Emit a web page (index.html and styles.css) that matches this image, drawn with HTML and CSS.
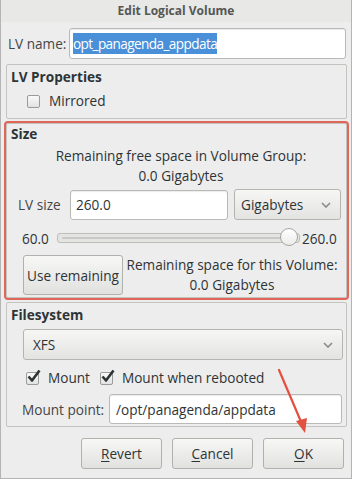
FILE: index.html
```html
<!DOCTYPE html>
<html lang="en">
<head>
    <meta charset="UTF-8">
    <meta name="viewport" content="width=device-width, initial-scale=1.0">
    <title>Edit Logical Volume</title>
    <link rel="stylesheet" href="styles.css">
</head>
<body>
    <div class="dialog">
        <div class="titlebar">Edit Logical Volume</div>

        <div class="content">
            <div class="name-row">
                <span class="label">LV name:</span>
                <div class="entry name-entry"><span class="selected">opt_panagenda_appdata</span></div>
            </div>

            <!-- LV properties -->
            <div class="frame props-frame">
                <div class="frame-title">LV Properties</div>
                <div class="check-row mirrored">
                    <span class="check"></span>
                    <span>Mirrored</span>
                </div>
            </div>

            <!-- size -->
            <div class="frame size-frame">
                <div class="frame-title">Size</div>
                <div class="center-line first">Remaining free space in Volume Group:</div>
                <div class="center-line">0.0 Gigabytes</div>
                <div class="size-row">
                    <span class="label">LV size</span>
                    <div class="entry size-entry">260.0</div>
                    <div class="combo unit-combo">
                        <span>Gigabytes</span>
                        <svg class="chevron" width="10" height="6" viewBox="0 0 10 6"><path d="M1 1 L5 5 L9 1" fill="none" stroke="#8a8a8a" stroke-width="1.6"/></svg>
                    </div>
                </div>
                <div class="slider-row">
                    <span class="slider-min">60.0</span>
                    <div class="trough">
                        <div class="fill"></div>
                        <div class="knob"></div>
                    </div>
                    <span class="slider-max">260.0</span>
                </div>
                <div class="remain-row">
                    <button class="btn use-btn">Use remaining</button>
                    <div class="remain-text">
                        <div>Remaining space for this Volume:</div>
                        <div>0.0 Gigabytes</div>
                    </div>
                </div>
            </div>

            <!-- filesystem -->
            <div class="frame fs-frame">
                <div class="frame-title">Filesystem</div>
                <div class="combo fs-combo">
                    <span>XFS</span>
                    <svg class="chevron" width="10" height="6" viewBox="0 0 10 6"><path d="M1 1 L5 5 L9 1" fill="none" stroke="#8a8a8a" stroke-width="1.6"/></svg>
                </div>
                <div class="mount-row">
                    <div class="check-row">
                        <span class="check checked"><svg width="16" height="14" viewBox="0 0 16 14"><path d="M2.5 7.5 L6 11.5 L13.5 1.5" fill="none" stroke="#2e3436" stroke-width="2.6" stroke-linejoin="round"/></svg></span>
                        <span>Mount</span>
                    </div>
                    <div class="check-row">
                        <span class="check checked"><svg width="16" height="14" viewBox="0 0 16 14"><path d="M2.5 7.5 L6 11.5 L13.5 1.5" fill="none" stroke="#2e3436" stroke-width="2.6" stroke-linejoin="round"/></svg></span>
                        <span>Mount when rebooted</span>
                    </div>
                </div>
                <div class="point-row">
                    <span class="label">Mount point:</span>
                    <div class="entry point-entry">/opt/panagenda/appdata</div>
                </div>
            </div>

            <div class="actions">
                <button class="btn action"><u>R</u>evert</button>
                <button class="btn action"><u>C</u>ancel</button>
                <button class="btn action"><u>O</u>K</button>
            </div>
        </div>

        <!-- annotation arrow -->
        <svg class="arrow" width="60" height="80" viewBox="0 0 60 80">
            <line x1="4" y1="4" x2="27" y2="58" stroke="#e2513f" stroke-width="2.2" stroke-linecap="round"/>
            <path d="M21 55 L30 67 L32 52 Z" fill="#e2513f"/>
        </svg>
    </div>
</body>
</html>
```

FILE: styles.css
```css
body { margin: 0; background: #ffffff; font-family: "Open Sans", "DejaVu Sans", sans-serif; font-size: 13.6px; color: #2e3436; }
.dialog { position: relative; width: 352px; height: 479px; box-sizing: border-box; border: 1px solid #b4b4b4; border-top: none; background: #ededed; }
.titlebar { height: 22px; line-height: 22px; text-align: center; font-size: 12px; font-weight: bold; color: #555753; background: #e8e8e7; }
.content { padding: 6px 4px 0 5px; }
.label { color: #454545; }

.entry { background: #fff; border: 1px solid #b9b9b6; border-radius: 3px; box-shadow: inset 0 1px 1px rgba(0,0,0,0.08); box-sizing: border-box; display: flex; align-items: center; padding-left: 5px; }
.selected { background: #4a90d9; color: #fff; padding: 1px 0; letter-spacing: -0.6px; }

.name-row { display: flex; align-items: center; height: 31px; }
.name-row .label { padding-left: 2px; width: 61px; }
.name-entry { width: 277px; height: 31px; padding-left: 3px; }

.frame { border: 1px solid #c3c3c0; border-radius: 2px; box-sizing: border-box; }
.frame-title { font-weight: bold; line-height: 18px; padding-left: 4px; }

.props-frame { margin-top: 5px; height: 55px; padding-top: 3px; }
.check-row { display: flex; align-items: center; gap: 9px; line-height: 20px; }
.mirrored { margin: 5px 0 0 20px; }
.check { position: relative; width: 11px; height: 11px; border: 1px solid #9b9b98; border-radius: 2px; background: linear-gradient(#fafafa, #e2e2e2); }
.check svg { position: absolute; left: -1px; top: -4px; }

.size-frame { margin-top: 4px; height: 175px; padding: 1px 5px 0 11px; outline: 2px solid #e0665a; }
.size-frame .frame-title { padding-left: 0; margin-left: -7px; }
.center-line { text-align: center; line-height: 20px; padding-left: 3px; }
.center-line.first { margin-top: 3px; }
.size-row { display: flex; align-items: center; margin-top: 3px; height: 31px; }
.size-row .label { width: 52px; }
.size-entry { width: 158px; height: 30px; }
.combo { border: 1px solid #b4b4b1; border-radius: 3px; background: linear-gradient(#f6f6f5, #e3e3e1); box-sizing: border-box; display: flex; align-items: center; justify-content: space-between; padding: 0 9px 0 6px; }
.unit-combo { width: 107px; height: 31px; margin-left: 6px; }
.slider-row { display: flex; align-items: center; height: 20px; margin-top: 8px; margin-left: 4px; }
.slider-min { width: 35px; }
.trough { position: relative; width: 243px; height: 10px; border: 1px solid #bdbdba; border-radius: 3px; background: #e4e4e2; box-sizing: border-box; }
.fill { height: 2px; margin: 3px 4px 0 4px; background: #c9c9c6; border-radius: 1px; }
.knob { position: absolute; right: 1px; top: -6px; width: 18px; height: 18px; border-radius: 50%; border: 1px solid #a5a5a2; background: linear-gradient(#ffffff, #ebebea); box-sizing: border-box; }
.slider-max { margin-left: 2px; }
.remain-row { display: flex; align-items: center; margin-top: 7px; margin-left: 5px; }
.btn { font-family: inherit; font-size: 13.6px; color: #2e3436; border: 1px solid #b1b1ae; border-radius: 3px; background: linear-gradient(#f7f7f6, #e1e1df); box-sizing: border-box; padding: 0; }
.use-btn { width: 100px; height: 40px; }
.remain-text { flex: 1; text-align: center; line-height: 20px; white-space: nowrap; }

.fs-frame { margin-top: 4px; height: 125px; padding: 3px 4px 0 16px; }
.fs-frame .frame-title { margin-left: -12px; padding-left: 0; }
.fs-combo { height: 31px; margin-top: 5px; width: 320px; padding-left: 9px; }
.mount-row { display: flex; gap: 10px; margin: 8px 0 0 3px; }
.point-row { display: flex; align-items: center; margin-top: 6px; }
.point-row .label { width: 87px; margin-left: -1px; }
.point-entry { width: 233px; height: 30px; padding-left: 6px; }

.actions { display: flex; justify-content: flex-end; gap: 10px; margin-top: 11px; padding-right: 3px; }
.action { width: 81px; height: 31px; }
.action u { text-decoration: underline; text-underline-offset: 2px; }

.arrow { position: absolute; left: 274px; top: 366px; }
```
